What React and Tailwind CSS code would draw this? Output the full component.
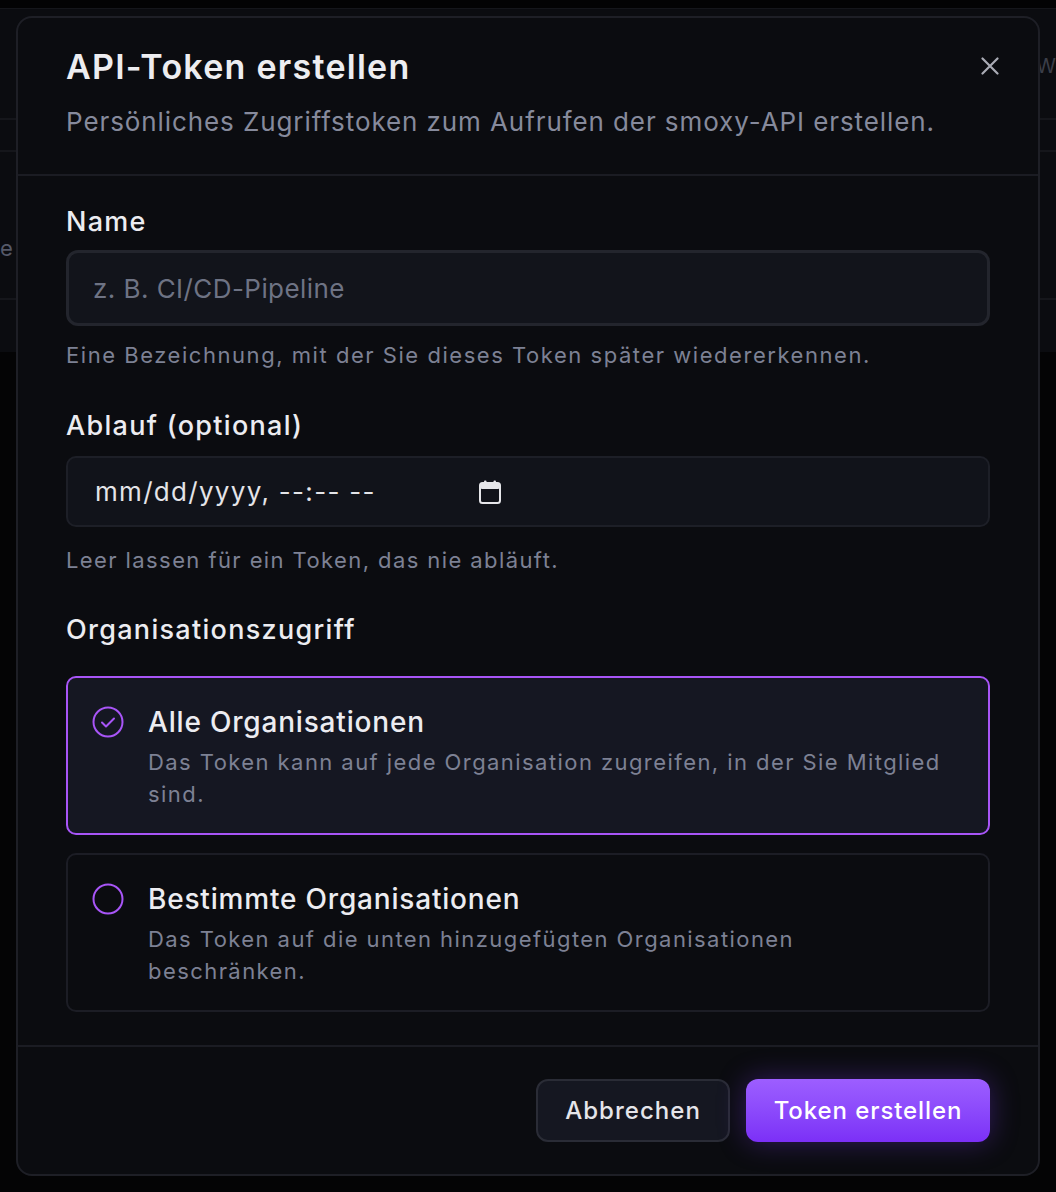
import React, { useState } from "react";

const font = { fontFamily: "Inter, 'Noto Sans', 'Liberation Sans', sans-serif" };

function CloseIcon() {
  return (
    <svg width="18" height="18" viewBox="0 0 18 18" fill="none" stroke="currentColor" strokeWidth="2.2" strokeLinecap="round">
      <path d="M1.5 1.5 16.5 16.5M16.5 1.5 1.5 16.5" />
    </svg>
  );
}

function CalendarIcon() {
  return (
    <svg width="22" height="24" viewBox="0 0 22 24" fill="none">
      <rect x="1" y="3" width="20" height="20" rx="2.5" stroke="#e6e6ea" strokeWidth="2" />
      <rect x="1" y="3" width="20" height="6" rx="2" fill="#e6e6ea" />
      <rect x="5" y="0.5" width="2.5" height="4" rx="1" fill="#e6e6ea" />
      <rect x="14.5" y="0.5" width="2.5" height="4" rx="1" fill="#e6e6ea" />
    </svg>
  );
}

function RadioMark({ checked }) {
  return (
    <svg width="32" height="32" viewBox="0 0 32 32" fill="none" stroke="#a855f7" strokeWidth="2" strokeLinecap="round" strokeLinejoin="round">
      <circle cx="16" cy="16" r="14.5" />
      {checked && <path d="M10 16.5 14 20.5l8-8" />}
    </svg>
  );
}

function OrgOption({ checked, title, text, onSelect }) {
  return (
    <button
      type="button"
      role="radio"
      aria-checked={checked}
      onClick={onSelect}
      className={`flex items-start gap-[24px] text-left rounded-[10px] border-2 pl-[24px] pr-[40px] pt-[26px] pb-[23px] ${
        checked ? "border-[#a855f7] bg-[#151722]" : "border-[#1c1d25] bg-[#0b0c10]"
      }`}
    >
      <span className="mt-[2px] shrink-0">
        <RadioMark checked={checked} />
      </span>
      <span className="flex flex-col">
        <span className="text-[28px] leading-[36px] font-medium text-[#ececf1] tracking-[0.029em]">{title}</span>
        <span className="mt-[6px] text-[22px] leading-[32px] text-[#7d8194] tracking-[0.065em]">{text}</span>
      </span>
    </button>
  );
}

export default function App() {
  const [scope, setScope] = useState("all");
  const [name, setName] = useState("");

  return (
    <div className="relative w-[1056px] h-[1192px] overflow-hidden bg-[#040405]" style={font}>
      {/* page behind the modal */}
      <div className="h-[8px] bg-[#030304]" />
      <div className="h-[344px] bg-[#0b0c10] border-t border-[#15161b] flex flex-col">
        <div className="h-[111px] border-b-2 border-[#15161b] flex items-start justify-end pt-[42px]">
          <span className="text-[20px] text-[#3b3e48]">W</span>
        </div>
        <div className="h-[32px] border-b-2 border-[#15161b]" />
        <div className="h-[148px] border-b-2 border-[#15161b] flex items-center">
          <span className="text-[22px] text-[#555968] mt-[46px]">e</span>
        </div>
      </div>

      {/* modal */}
      <div
        role="dialog"
        className="absolute left-[16px] top-[16px] w-[1024px] flex flex-col rounded-[16px] border-2 border-[#1e1f26] bg-[#0b0c10]"
      >
        <button type="button" className="absolute right-[39px] top-[39px] text-[#a9abb5]">
          <CloseIcon />
        </button>

        <div className="px-[48px] pt-[29px] pb-[34px] border-b-2 border-[#1b1c23]">
          <h2 className="text-[34px] leading-[40px] font-semibold text-[#ededf0] tracking-[0.037em]">API-Token erstellen</h2>
          <p className="mt-[17px] text-[26px] leading-[36px] text-[#868a9c] tracking-[0.035em]">
            Persönliches Zugriffstoken zum Aufrufen der smoxy-API erstellen.
          </p>
        </div>

        <div className="px-[48px] pt-[28px] pb-[33px] flex flex-col">
          <label className="text-[27px] leading-[36px] font-medium text-[#ececf1] tracking-[0.045em]">Name</label>
          <input
            value={name}
            onChange={(e) => setName(e.target.value)}
            placeholder="z. B. CI/CD-Pipeline"
            className="mt-[10px] h-[76px] rounded-[12px] border-[3px] border-[#23252d] bg-[#12141b] px-[24px] text-[26px] tracking-[0.017em] text-[#e4e4e8] placeholder:text-[#6e7384] outline-none"
          />
          <p className="mt-[13px] text-[22px] leading-[32px] text-[#7d8194] tracking-[0.07em]">
            Eine Bezeichnung, mit der Sie dieses Token später wiedererkennen.
          </p>

          <label className="mt-[37px] text-[27px] leading-[36px] font-medium text-[#ececf1] tracking-[0.048em]">Ablauf (optional)</label>
          <div className="mt-[12px] h-[71px] rounded-[10px] border-2 border-[#1d1f27] bg-[#11131a] flex items-center pl-[27px]">
            <span className="text-[26px] text-[#e4e4e8] w-[384px] tracking-[0.05em]">mm/dd/yyyy, --:-- --</span>
            <CalendarIcon />
          </div>
          <p className="mt-[17px] text-[22px] leading-[32px] text-[#7d8194] tracking-[0.064em]">
            Leer lassen für ein Token, das nie abläuft.
          </p>

          <p className="mt-[36px] text-[27px] leading-[36px] font-medium text-[#ececf1] tracking-[0.048em]">Organisationszugriff</p>
          <div role="radiogroup" className="mt-[28px] flex flex-col gap-[18px]">
            <OrgOption
              checked={scope === "all"}
              onSelect={() => setScope("all")}
              title="Alle Organisationen"
              text="Das Token kann auf jede Organisation zugreifen, in der Sie Mitglied sind."
            />
            <OrgOption
              checked={scope === "some"}
              onSelect={() => setScope("some")}
              title="Bestimmte Organisationen"
              text="Das Token auf die unten hinzugefügten Organisationen beschränken."
            />
          </div>
        </div>

        <div className="border-t-2 border-[#1b1c23] px-[48px] pt-[32px] pb-[32px] flex justify-end gap-[16px]">
          <button
            type="button"
            className="h-[63px] w-[194px] rounded-[12px] border-2 border-[#2a2c36] bg-[#151721] text-[24px] font-medium text-[#e5e5ea] tracking-[0.043em]"
          >
            Abbrechen
          </button>
          <button
            type="button"
            className="h-[63px] w-[244px] rounded-[12px] bg-gradient-to-b from-[#9d5eff] to-[#7c2ff7] text-[24px] font-medium text-white tracking-[0.038em] shadow-[0_0_28px_rgba(124,58,237,0.35)]"
          >
            Token erstellen
          </button>
        </div>
      </div>
    </div>
  );
}
